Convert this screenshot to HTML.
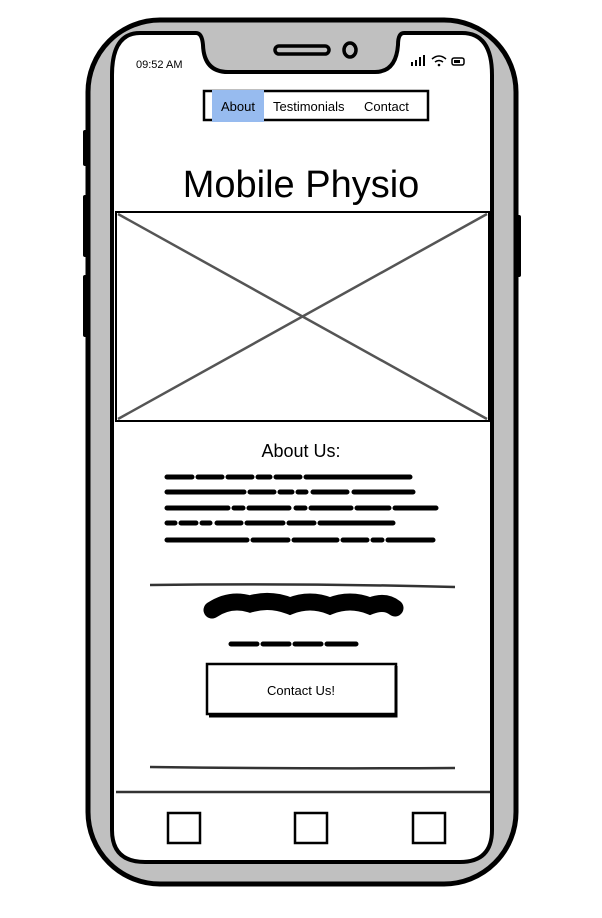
<!DOCTYPE html><html><head><style>body{margin:0;background:#fff}svg{display:block}text{font-family:"Liberation Sans",sans-serif}</style></head><body>
<svg width="602" height="918" viewBox="0 0 602 918">
<rect x="83" y="130" width="8" height="36" rx="2" fill="#000"/>
<rect x="83" y="195" width="8" height="62" rx="2" fill="#000"/>
<rect x="83" y="275" width="8" height="62" rx="2" fill="#000"/>
<rect x="513" y="215" width="8" height="62" rx="2" fill="#000"/>
<rect x="88" y="20" width="428" height="864" rx="72" fill="#c0c0c0" stroke="#000" stroke-width="5"/>
<path d="M196 33 H140 Q112 33 112 75 V830 Q112 862 145 862 H460 Q492 862 492 830 V75 Q492 33 462 33 H404 Q398 33 398 45 Q396 72 375 72 H228 Q204 72 203 45 Q202 33 196 33 Z" fill="#fff" stroke="#000" stroke-width="4"/>
<rect x="275" y="46" width="54" height="8" rx="4" fill="none" stroke="#000" stroke-width="3.5"/>
<ellipse cx="350" cy="50" rx="6" ry="7" fill="none" stroke="#000" stroke-width="3.5"/>
<text x="136" y="68" font-size="11">09:52 AM</text>
<g fill="#000"><rect x="411" y="62" width="2" height="4"/><rect x="415" y="60" width="2" height="6"/><rect x="419" y="57" width="2" height="9"/><rect x="423" y="55" width="2" height="11"/></g>
<path d="M432 59 q7-6 14 0 M435 62 q4-3 8 0" fill="none" stroke="#000" stroke-width="1.5"/><circle cx="439" cy="65" r="1.3"/>
<rect x="452" y="58" width="12" height="7" rx="2" fill="none" stroke="#000" stroke-width="1.5"/><rect x="454" y="60" width="6" height="3"/>
<rect x="204" y="91" width="224" height="29" fill="none" stroke="#000" stroke-width="2.5"/>
<rect x="212" y="90" width="52" height="32" fill="#97bbef"/>
<text x="221" y="111" font-size="13">About</text>
<text x="273" y="111" font-size="13">Testimonials</text>
<text x="364" y="111" font-size="13">Contact</text>
<text x="301" y="197" font-size="38" text-anchor="middle">Mobile Physio</text>
<rect x="116" y="212" width="373" height="209" fill="#fff" stroke="#000" stroke-width="2"/>
<path d="M118 214 L487 419 M487 214 L118 419" stroke="#555" stroke-width="2.5"/>
<text x="301" y="457" font-size="18" text-anchor="middle">About Us:</text>
<g stroke="#000" stroke-width="5" stroke-linecap="round" fill="none">
<path d="M167 477 H192 M198 477 H222 M228 477 H252 M258 477 H270 M276 477 H300 M306 477 H410"/>
<path d="M167 492 H244 M250 492 H274 M280 492 H292 M298 492 H306 M313 492 H347 M354 492 H413"/>
<path d="M167 508 H228 M234 508 H243 M249 508 H289 M296 508 H305 M311 508 H351 M357 508 H389 M395 508 H436"/>
<path d="M167 523 H175 M181 523 H196 M202 523 H210 M217 523 H241 M247 523 H283 M289 523 H314 M320 523 H393"/>
<path d="M167 540 H247 M253 540 H288 M294 540 H337 M343 540 H367 M373 540 H382 M388 540 H433"/>
<path d="M231 644 H257 M263 644 H289 M295 644 H321 M327 644 H356"/>
</g>
<path d="M150 585 Q300 583 455 587" stroke="#333" stroke-width="2.5" fill="none"/>
<path d="M212 610 Q230 598 250 604 Q270 598 290 606 Q310 598 330 606 Q350 598 370 606 Q385 600 395 608" stroke="#000" stroke-width="17" stroke-linecap="round" fill="none"/>
<rect x="207" y="664" width="189" height="50" fill="#fff" stroke="#000" stroke-width="2.5"/>
<path d="M396 666 V716 H209" stroke="#000" stroke-width="3" fill="none"/>
<text x="301" y="695" font-size="13" text-anchor="middle">Contact Us!</text>
<path d="M150 767 Q300 769 455 768" stroke="#333" stroke-width="2.5" fill="none"/>
<path d="M116 792 H490" stroke="#333" stroke-width="2.5"/>
<g fill="none" stroke="#000" stroke-width="2.5"><rect x="168" y="813" width="32" height="30"/><rect x="295" y="813" width="32" height="30"/><rect x="413" y="813" width="32" height="30"/></g>
</svg></body></html>
